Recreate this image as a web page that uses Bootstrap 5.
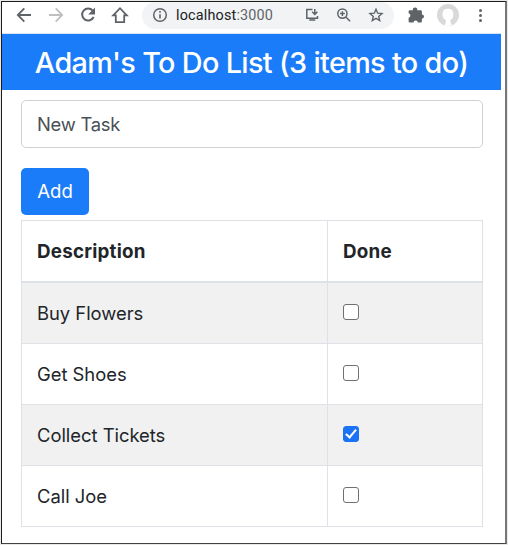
<!DOCTYPE html>
<html lang="en">
<head>
<meta charset="utf-8">
<meta name="viewport" content="width=device-width, initial-scale=1">
<title>To Do List</title>
<link href="https://cdn.jsdelivr.net/npm/bootstrap@5.3.0/dist/css/bootstrap.min.css" rel="stylesheet">
<style>
body { background: #e9e9e7; font-family: Inter, "Liberation Sans", sans-serif; font-size: 18.4px; line-height: 28px; color: #212529; overflow: hidden; }
.window { width: 506px; height: 543px; margin: 1px 0 0 1px; border: 1px solid #1c1c1c; border-right: 2px solid #777; border-bottom-color: #444; }
.toolbar { height: 31px; padding-left: 6px; }
.tool { width: 32px; height: 26px; flex: none; color: #5f6368; }
.tool svg, .omnibox svg { display: block; }
.omnibox { width: 252px; height: 27px; margin-left: 6px; border-radius: 14px; background: #f1f3f4; color: #5f6368; }
.address { font-family: Roboto, sans-serif; font-size: 14.4px; line-height: 28px; width: 118px; letter-spacing: .17px; }
.address span { color: #202124; }
.page { width: 499px; border-top: 1px solid #d5e3f3; }
.title { height: 56px; background: #1a7cf9; font-size: 28.8px; line-height: 58px; font-weight: 500; letter-spacing: -.65px; white-space: nowrap; }
.content { padding: 10px 18px 0 19px; }
.task-input { height: 48px; border: 1px solid #cfd1d4; border-radius: 5px; padding: 0 15px; font-size: 18.4px; letter-spacing: -.25px; color: #495057; }
.task-input::placeholder { color: #495057; opacity: 1; }
.btn-add { width: 68px; height: 47px; margin-top: 20px; background: #1a7cf9; color: #fff; border: 0; border-radius: 5px; font-size: 18.6px; padding: 0; display: block; }
.tasks { width: 462px; margin: 5px 0 0; table-layout: fixed; border-collapse: separate; border-spacing: 0; border-top: 1px solid #dee2e6; border-left: 1px solid #dee2e6; }
.tasks > :not(caption) > * > * { padding: 0 15px 1px; height: 61px; border-width: 0 1px 1px 0; border-color: #dee2e6; vertical-align: middle; color: #212529; letter-spacing: -.02px; }
.tasks > thead > tr > th { height: 62px; padding-top: 1px; padding-bottom: 0; border-bottom-width: 2px; font-weight: 700; font-size: 18.8px; letter-spacing: .22px; }
.tasks > tbody > tr:nth-child(odd) > td { background: #f1f1f1; box-shadow: none; }
.tasks input { display: block; appearance: none; width: 16px; height: 16px; margin: -2px 0 0; border: 1px solid #707070; border-radius: 3px; background: #fff; }
.tasks input:checked { border-color: #1a73f5; background: #1a73f5; display: grid; }
.tasks input:checked::before { content: ""; width: 6px; height: 11px; margin: 0 0 0 4px; border: solid #fff; border-width: 0 2.6px 2.6px 0; transform: rotate(40deg); }
</style>
</head>
<body>
<div class="window bg-white overflow-hidden">
  <div class="toolbar d-flex align-items-start">
    <div class="tool"><svg width="32" height="26" viewBox="8 2 32 26" fill="none" stroke="currentColor" stroke-width="1.8"><path d="M31 15H18.5M24.3 8.4 17.8 15l6.5 6.6"/></svg></div>
    <div class="tool"><svg width="32" height="26" viewBox="40 2 32 26" fill="none" stroke="#bdbfc1" stroke-width="1.8"><path d="M49 15h12.5M55.7 8.4l6.5 6.6-6.5 6.6"/></svg></div>
    <div class="tool"><svg width="32" height="26" viewBox="72 2 32 26"><path d="M92.7 10.6A6 6 0 1 0 93.6 17" fill="none" stroke="currentColor" stroke-width="2"/><path d="M95 7.6v6.8h-6.8z" fill="currentColor"/></svg></div>
    <div class="tool"><svg width="32" height="26" viewBox="104 2 32 26" fill="none" stroke="currentColor" stroke-width="1.8"><path d="M113.2 15.3h2.6v6.8h8.4v-6.8h2.6L120 8.2z"/></svg></div>
    <div class="omnibox d-flex">
      <svg width="34" height="26" viewBox="142 2 34 26"><circle cx="160" cy="15" r="6.3" fill="none" stroke="currentColor" stroke-width="1.5"/><path d="M160 14.2v4.3M160 11v1.7" stroke="currentColor" stroke-width="1.6"/></svg>
      <div class="address"><span>localhost</span>:3000</div>
      <svg width="100" height="26" viewBox="294 2 100 26" fill="none" stroke="currentColor" stroke-width="1.5"><path d="M312.5 9.6h-5.7v8.6h10.7v-2.1M309.3 19.9h6M314.8 9v5.2M312.2 11.8l2.6 2.7 2.6-2.7"/><circle cx="342.4" cy="13.6" r="4.6"/><path d="m345.8 17 4.3 4.3M340 13.6h4.8M342.4 11.2V16"/><path stroke-width="1.4" d="m376 9.2 1.7 4 4.3.4-3.3 2.8 1 4.2-3.7-2.2-3.7 2.2 1-4.2-3.3-2.8 4.3-.4z"/></svg>
    </div>
    <div class="tool ms-1"><svg width="32" height="26" viewBox="398 2 32 26" fill="currentColor"><path d="M409.8 10.2h3.1a2.2 2.2 0 1 1 4.3 0h3.5q1.2 0 1.2 1.2v3.1a2.1 2.1 0 1 1 0 4.2v2.5q0 1.2-1.2 1.2h-2.8a2.3 2.3 0 0 0-4.5 0h-3.6q-1.2 0-1.2-1.2v-3.4a2.3 2.3 0 0 0 0-4.5v-1.9q0-1.2 1.2-1.2z"/></svg></div>
    <div class="tool"><svg width="32" height="26" viewBox="430 2 32 26"><circle cx="448" cy="15" r="11" fill="#d8d9db"/><path d="M444 25.2q1.9-1.6 1.9-3.8v-1.2q-3.4-1.7-3.4-6.3 0-5.2 5.4-5.2t5.4 5.2q0 4.6-2.9 6.3v1.2q.1 2 1.6 3.3-4 2.2-8 .5z" fill="#fff"/></svg></div>
    <div class="tool"><svg width="32" height="26" viewBox="462 2 32 26" fill="currentColor"><circle cx="480.5" cy="10.5" r="1.5"/><circle cx="480.5" cy="15.5" r="1.5"/><circle cx="480.5" cy="20.5" r="1.5"/></svg></div>
  </div>
  <main class="page">
    <h1 class="title text-white text-center m-0">Adam's To Do List (3 items to do)</h1>
    <div class="content">
      <input class="form-control task-input" type="text" placeholder="New Task" aria-label="New Task">
      <button class="btn btn-primary btn-add" type="button">Add</button>
      <table class="table table-striped table-bordered tasks">
        <colgroup><col style="width:306px"><col></colgroup>
        <thead><tr><th>Description</th><th>Done</th></tr></thead>
        <tbody>
          <tr><td>Buy Flowers</td><td><input type="checkbox" aria-label="Buy Flowers"></td></tr>
          <tr><td>Get Shoes</td><td><input type="checkbox" aria-label="Get Shoes"></td></tr>
          <tr><td>Collect Tickets</td><td><input type="checkbox" aria-label="Collect Tickets" checked></td></tr>
          <tr><td>Call Joe</td><td><input type="checkbox" aria-label="Call Joe"></td></tr>
        </tbody>
      </table>
    </div>
  </main>
</div>
<script src="https://cdn.jsdelivr.net/npm/bootstrap@5.3.0/dist/js/bootstrap.bundle.min.js"></script>
</body>
</html>
